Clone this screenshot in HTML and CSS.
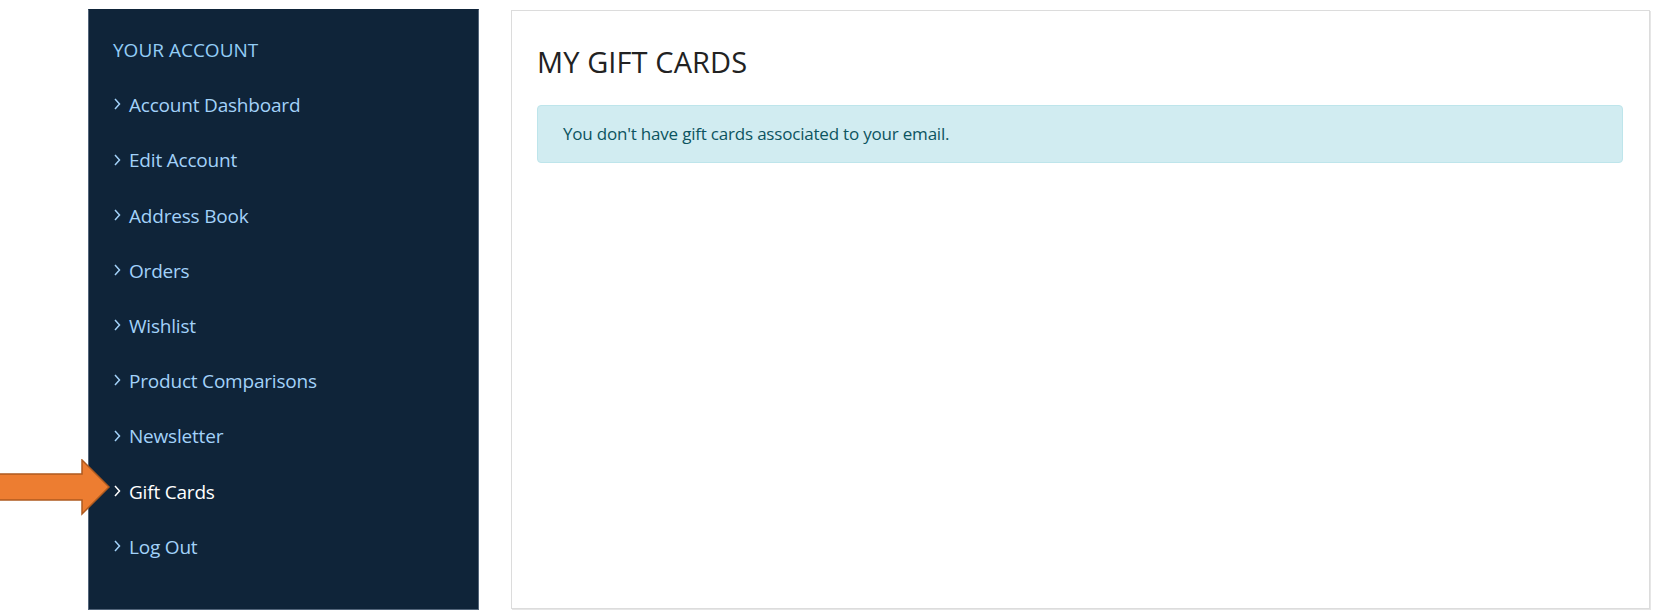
FILE: index.html
```html
<!DOCTYPE html>
<html lang="en">
<head>
    <meta charset="UTF-8">
    <meta name="viewport" content="width=device-width, initial-scale=1.0">
    <title>My Gift Cards</title>
    <link rel="stylesheet" href="styles.css">
</head>
<body>
    <div class="account-page">
        <aside class="account-menu">
            <h3 class="menu-title">YOUR ACCOUNT</h3>
            <ul class="menu-list">
                <li><a href="#"><svg class="chevron" viewBox="0 0 7 12"><polyline points="1,1 5.5,6 1,11"/></svg>Account Dashboard</a></li>
                <li><a href="#"><svg class="chevron" viewBox="0 0 7 12"><polyline points="1,1 5.5,6 1,11"/></svg>Edit Account</a></li>
                <li><a href="#"><svg class="chevron" viewBox="0 0 7 12"><polyline points="1,1 5.5,6 1,11"/></svg>Address Book</a></li>
                <li><a href="#"><svg class="chevron" viewBox="0 0 7 12"><polyline points="1,1 5.5,6 1,11"/></svg>Orders</a></li>
                <li><a href="#"><svg class="chevron" viewBox="0 0 7 12"><polyline points="1,1 5.5,6 1,11"/></svg>Wishlist</a></li>
                <li><a href="#"><svg class="chevron" viewBox="0 0 7 12"><polyline points="1,1 5.5,6 1,11"/></svg>Product Comparisons</a></li>
                <li><a href="#"><svg class="chevron" viewBox="0 0 7 12"><polyline points="1,1 5.5,6 1,11"/></svg>Newsletter</a></li>
                <li class="active"><a href="#"><svg class="chevron" viewBox="0 0 7 12"><polyline points="1,1 5.5,6 1,11"/></svg>Gift Cards</a></li>
                <li><a href="#"><svg class="chevron" viewBox="0 0 7 12"><polyline points="1,1 5.5,6 1,11"/></svg>Log Out</a></li>
            </ul>
        </aside>

        <main class="account-content">
            <h1 class="page-title">MY GIFT CARDS</h1>
            <div class="alert-info">You don't have gift cards associated to your email.</div>
        </main>
    </div>

    <!-- callout arrow pointing at the current menu entry -->
    <svg class="callout-arrow" width="114" height="58" viewBox="0 0 114 58">
        <polygon points="-4,15 82,15 82,1 109,28 82,55 82,41 -4,41"
                 fill="#ed7d31" stroke="#ae5a1f" stroke-width="1.5" stroke-linejoin="miter"/>
    </svg>
</body>
</html>
```

FILE: styles.css
```css
body, html {
    margin: 0; padding: 0; width: 100%; height: 100%; background: #fff;
    font-family: 'Open Sans', 'Noto Sans', sans-serif; overflow: hidden;
}
.account-page {
    display: flex; gap: 32px; align-items: flex-start;
    padding: 9px 10px 0 88px;
}
.account-menu {
    width: 391px; height: 601px; box-sizing: border-box; flex-shrink: 0;
    background-color: #0f2439; border: 1px solid #53657a; border-top-color: #0f2439;
    padding: 13px 24px 0 24px;
}
.menu-title {
    margin: 0; font-size: 19px; font-weight: 400; line-height: 55.2px;
    color: #93cdf6;
}
.menu-list {
    list-style: none; margin: 0; padding: 0;
}
.menu-list li {
    line-height: 55.2px; font-size: 19px;
}
.menu-list a {
    display: flex; align-items: center; color: #a3d2f9; text-decoration: none;
    letter-spacing: -0.2px;
}
.menu-list li.active a {
    color: #ffffff;
}
.chevron {
    width: 7px; height: 12px; margin: 0 8px 3px 1px; flex-shrink: 0;
    fill: none; stroke: currentColor; stroke-width: 1.5;
}
.account-content {
    flex: 1; height: 599px; box-sizing: border-box;
    border: 1px solid #dcdcdc; box-shadow: 1px 1px 0 #e6e6e6;
    padding: 0 26px 0 25px; margin-top: 1px;
}
.page-title {
    margin: 32px 0 24px 0; font-size: 29px; font-weight: 400; line-height: 38px;
    color: #222; letter-spacing: 0.1px;
}
.alert-info {
    background-color: #d1ecf1; border: 1px solid #bee5eb; border-radius: 4px;
    color: #0c5460; font-size: 17px; line-height: 20px;
    padding: 18px 25px; letter-spacing: -0.2px;
}
.callout-arrow {
    position: absolute; left: 0; top: 459px;
}
```
